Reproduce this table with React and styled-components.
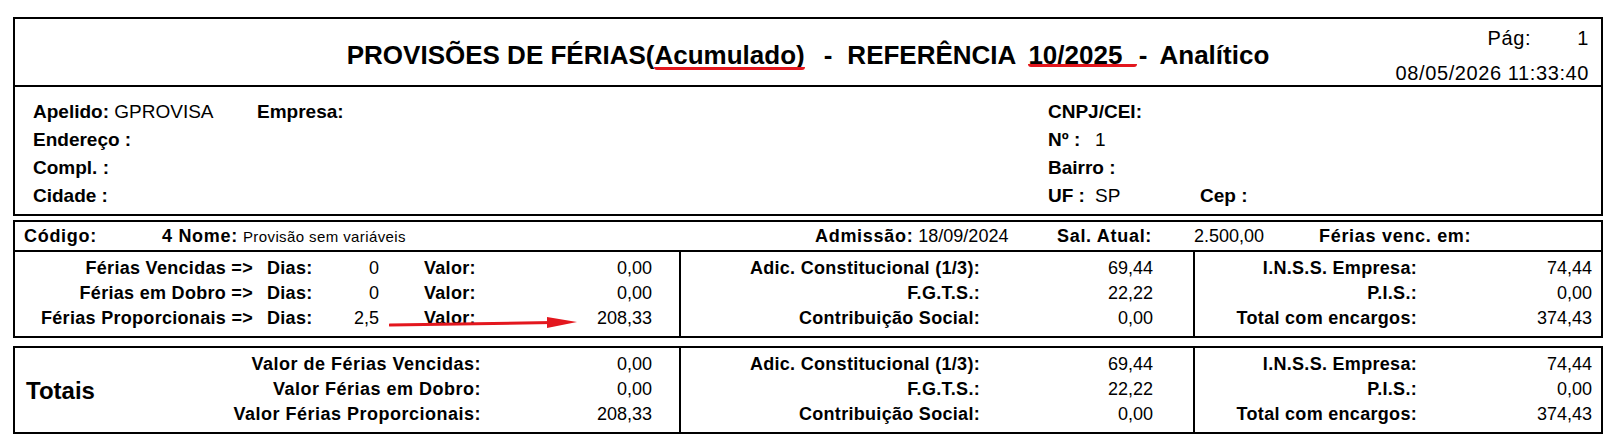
import React from "react";
import styled, { createGlobalStyle } from "styled-components";

const GlobalStyle = createGlobalStyle`
  html, body { margin: 0; padding: 0; background: #fff; }
  body { font-family: "Liberation Sans", Arial, sans-serif; color: #000; }
`;

const vacations = [
  { label: "Férias Vencidas =>", days: "0", value: "0,00" },
  { label: "Férias em Dobro =>", days: "0", value: "0,00" },
  { label: "Férias Proporcionais =>", days: "2,5", value: "208,33" },
];

const charges = [
  ["Adic. Constitucional (1/3):", "69,44"],
  ["F.G.T.S.:", "22,22"],
  ["Contribuição Social:", "0,00"],
];

const taxes = [
  ["I.N.S.S. Empresa:", "74,44"],
  ["P.I.S.:", "0,00"],
  ["Total com encargos:", "374,43"],
];

const totals = [
  ["Valor de Férias Vencidas:", "0,00"],
  ["Valor Férias em Dobro:", "0,00"],
  ["Valor Férias Proporcionais:", "208,33"],
];

export default function App() {
  return (
    <>
      <GlobalStyle />
      <Page>
        <Frame>
          <Header>
            <Title>
              <span>PROVISÕES DE FÉRIAS(</span>
              <Marked $bottom={-1}>Acumulado)</Marked>
              <Dash $l={19} $r={15}>-</Dash>
              <span>REFERÊNCIA</span>
              <Marked $bottom={2} $ml={12}>10/2025  </Marked>
              <Dash $l={2} $r={12}>-</Dash>
              <span>Analítico</span>
            </Title>
            <Meta>
              <PageRow>
                <span>Pág:</span>
                <span>1</span>
              </PageRow>
              <div>08/05/2026 11:33:40</div>
            </Meta>
          </Header>

          <Company>
            <span><Label>Apelido:</Label> GPROVISA</span>
            <Label>Empresa:</Label>
            <Pair><Label>CNPJ/CEI:</Label></Pair>
            <span />

            <Label>Endereço :</Label>
            <span />
            <Pair><PairLabel>Nº :</PairLabel><span>1</span></Pair>
            <span />

            <Label>Compl. :</Label>
            <span />
            <Pair><PairLabel>Bairro :</PairLabel></Pair>
            <span />

            <Label>Cidade :</Label>
            <span />
            <Pair><PairLabel>UF :</PairLabel><span>SP</span></Pair>
            <Label>Cep :</Label>
          </Company>
        </Frame>

        <Box $gap={4}>
          <CodeRow>
            <CodeLabel>Código:</CodeLabel>
            <span>
              <CodeLabel>4 Nome:</CodeLabel> <Small>Provisão sem variáveis</Small>
            </span>
            <span>
              <CodeLabel>Admissão:</CodeLabel> 18/09/2024
            </span>
            <CodeLabel>Sal. Atual:</CodeLabel>
            <span>2.500,00</span>
            <CodeLabel>Férias venc. em:</CodeLabel>
          </CodeRow>

          <Columns>
            <Cell $cols="238px 74px 52px 145px 128px" $pad="4px 0 5px" $row={25}>
              {vacations.map(v => (
                <React.Fragment key={v.label}>
                  <RightLabel>{v.label}</RightLabel>
                  <LeftLabel $indent={14}>Dias:</LeftLabel>
                  <Num>{v.days}</Num>
                  <LeftLabel $indent={45}>Valor:</LeftLabel>
                  <Num>{v.value}</Num>
                </React.Fragment>
              ))}
              <Arrow width="190" height="18" viewBox="0 0 190 18">
                <line x1="1" y1="11" x2="164" y2="8.5" stroke="#e3171e" strokeWidth="3" strokeLinecap="round" />
                <polygon points="158,3 188,8 158,14" fill="#e3171e" />
              </Arrow>
            </Cell>
            <Cell $divider $cols="299px 173px" $pad="4px 0 5px" $row={25}>
              {charges.map(([l, v]) => (
                <React.Fragment key={l}>
                  <RightLabel>{l}</RightLabel>
                  <Num>{v}</Num>
                </React.Fragment>
              ))}
            </Cell>
            <Cell $divider $cols="222px 175px" $pad="4px 0 5px" $row={25}>
              {taxes.map(([l, v]) => (
                <React.Fragment key={l}>
                  <RightLabel>{l}</RightLabel>
                  <Num>{v}</Num>
                </React.Fragment>
              ))}
            </Cell>
          </Columns>
        </Box>

        <Box $gap={8}>
          <Columns>
            <Cell $cols="200px 266px 171px" $pad="4px 0 5px" $row={25}>
              <Totals>Totais</Totals>
              {totals.map(([l, v]) => (
                <React.Fragment key={l}>
                  <RightLabel $col={2} $ls={0.5}>{l}</RightLabel>
                  <Num>{v}</Num>
                </React.Fragment>
              ))}
            </Cell>
            <Cell $divider $cols="299px 173px" $pad="4px 0 5px" $row={25}>
              {charges.map(([l, v]) => (
                <React.Fragment key={l}>
                  <RightLabel>{l}</RightLabel>
                  <Num>{v}</Num>
                </React.Fragment>
              ))}
            </Cell>
            <Cell $divider $cols="222px 175px" $pad="4px 0 5px" $row={25}>
              {taxes.map(([l, v]) => (
                <React.Fragment key={l}>
                  <RightLabel>{l}</RightLabel>
                  <Num>{v}</Num>
                </React.Fragment>
              ))}
            </Cell>
          </Columns>
        </Box>
      </Page>
    </>
  );
}

const Page = styled.div`
  width: 1590px;
  margin: 17px 0 0 13px;
`;

const Frame = styled.div`
  border: 2px solid #000;
`;

const Header = styled.header`
  display: grid;
  grid-template-columns: 1fr auto 1fr;
  height: 66px;
  border-bottom: 2px solid #000;
`;

const Title = styled.h1`
  grid-column: 2;
  margin: 0;
  padding-top: 22px;
  display: flex;
  align-items: flex-start;
  font-size: 26px;
  line-height: 28px;
  font-weight: 700;
  white-space: pre;
`;

const Dash = styled.span`
  margin: 0 ${p => p.$r}px 0 ${p => p.$l}px;
`;

const Marked = styled.span`
  position: relative;
  margin-left: ${p => p.$ml || 0}px;

  &::after {
    content: "";
    position: absolute;
    left: 0;
    right: 0;
    bottom: ${p => p.$bottom}px;
    height: 3px;
    background: #e3171e;
    border-radius: 0 0 3px 3px;
  }
`;

const Meta = styled.div`
  grid-column: 3;
  justify-self: end;
  padding: 7px 12px 0 0;
  font-size: 20px;
  line-height: 24px;
  letter-spacing: 0.6px;
`;

const PageRow = styled.div`
  display: flex;
  justify-content: space-between;
  padding-left: 92px;
  margin-bottom: 11px;
`;

const Company = styled.div`
  display: grid;
  grid-template-columns: 224px 791px 152px 1fr;
  grid-auto-rows: 28px;
  align-items: center;
  height: 127px;
  box-sizing: border-box;
  padding: 11px 0 4px 18px;
  font-size: 19px;
`;

const Label = styled.b`
  font-weight: 700;
`;

const Pair = styled.span`
  display: flex;
  white-space: pre;
`;

const PairLabel = styled.b`
  min-width: 47px;
  font-weight: 700;
`;

const Box = styled.section`
  border: 2px solid #000;
  margin-top: ${p => p.$gap}px;
`;

const CodeRow = styled.div`
  display: grid;
  grid-template-columns: 138px 653px 242px 137px 125px 1fr;
  align-items: center;
  height: 28px;
  padding-left: 9px;
  border-bottom: 2px solid #000;
  font-size: 18px;
  white-space: nowrap;
`;

const CodeLabel = styled.b`
  font-weight: 700;
  letter-spacing: 0.7px;
`;

const Small = styled.span`
  font-size: 15px;
  letter-spacing: 0.4px;
`;

const Columns = styled.div`
  display: grid;
  grid-template-columns: 664px 514px 1fr;
  font-size: 18px;
`;

const Cell = styled.div`
  position: relative;
  display: grid;
  grid-template-columns: ${p => p.$cols};
  grid-auto-rows: ${p => p.$row}px;
  align-items: center;
  padding: ${p => p.$pad};
  border-left: ${p => (p.$divider ? "2px solid #000" : "none")};
  white-space: nowrap;
`;

const RightLabel = styled.b`
  grid-column: ${p => p.$col || "auto"};
  text-align: right;
  font-weight: 700;
  letter-spacing: ${p => p.$ls ?? 0.3}px;
`;

const LeftLabel = styled.b`
  padding-left: ${p => p.$indent}px;
  font-weight: 700;
  letter-spacing: 0.3px;
`;

const Num = styled.span`
  text-align: right;
`;

const Totals = styled.b`
  grid-column: 1;
  grid-row: 1 / 4;
  align-self: center;
  padding: 3px 0 0 11px;
  font-size: 24px;
  font-weight: 700;
`;

const Arrow = styled.svg`
  position: absolute;
  left: 374px;
  top: 62px;
`;
